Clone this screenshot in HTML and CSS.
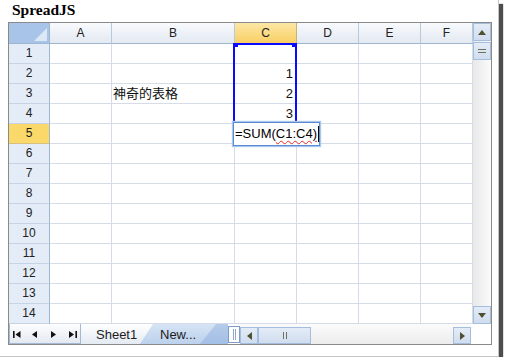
FILE: index.html
```html
<!DOCTYPE html>
<html>
<head>
<meta charset="utf-8">
<link rel="stylesheet" href="styles.css">
</head>
<body>
<div class="frame">
  <div class="title">SpreadJS</div>
  <div class="spread">
    <div class="body">
      <div class="sheet">
        <div class="cn"></div><div class="ch">A</div><div class="ch">B</div><div class="ch sel">C</div><div class="ch">D</div><div class="ch">E</div><div class="ch">F</div>
        <div class="rh">1</div><div class="c"></div><div class="c"></div><div class="c"></div><div class="c"></div><div class="c"></div><div class="c"></div>
        <div class="rh">2</div><div class="c"></div><div class="c"></div><div class="c num">1</div><div class="c"></div><div class="c"></div><div class="c"></div>
        <div class="rh">3</div><div class="c"></div><div class="c cjk">神奇的表格</div><div class="c num">2</div><div class="c"></div><div class="c"></div><div class="c"></div>
        <div class="rh">4</div><div class="c"></div><div class="c"></div><div class="c num">3</div><div class="c"></div><div class="c"></div><div class="c"></div>
        <div class="rh sel">5</div><div class="c"></div><div class="c"></div><div class="c"></div><div class="c"></div><div class="c"></div><div class="c"></div>
        <div class="rh">6</div><div class="c"></div><div class="c"></div><div class="c"></div><div class="c"></div><div class="c"></div><div class="c"></div>
        <div class="rh">7</div><div class="c"></div><div class="c"></div><div class="c"></div><div class="c"></div><div class="c"></div><div class="c"></div>
        <div class="rh">8</div><div class="c"></div><div class="c"></div><div class="c"></div><div class="c"></div><div class="c"></div><div class="c"></div>
        <div class="rh">9</div><div class="c"></div><div class="c"></div><div class="c"></div><div class="c"></div><div class="c"></div><div class="c"></div>
        <div class="rh">10</div><div class="c"></div><div class="c"></div><div class="c"></div><div class="c"></div><div class="c"></div><div class="c"></div>
        <div class="rh">11</div><div class="c"></div><div class="c"></div><div class="c"></div><div class="c"></div><div class="c"></div><div class="c"></div>
        <div class="rh">12</div><div class="c"></div><div class="c"></div><div class="c"></div><div class="c"></div><div class="c"></div><div class="c"></div>
        <div class="rh">13</div><div class="c"></div><div class="c"></div><div class="c"></div><div class="c"></div><div class="c"></div><div class="c"></div>
        <div class="rh">14</div><div class="c"></div><div class="c"></div><div class="c"></div><div class="c"></div><div class="c"></div><div class="c"></div>

        <div class="selection">
          <span class="h tl"></span><span class="h tr"></span><span class="h bl"></span><span class="h br"></span>
        </div>
        <div class="editor">=SUM(<span class="spell">C1:C4)</span><span class="caret"></span></div>
      </div>
      <div class="vscroll">
        <div class="sbtn vbtn"><svg width="8" height="5" viewBox="0 0 8 5"><polygon points="0,5 8,5 4,0" fill="#4e5036"/></svg></div>
        <div class="sbtn vthumb"><span class="hgrip"></span></div>
        <div class="vtrack"></div>
        <div class="sbtn vbtn"><svg width="8" height="5" viewBox="0 0 8 5"><polygon points="0,0 8,0 4,5" fill="#4e5036"/></svg></div>
      </div>
    </div>
    <div class="tabbar">
      <div class="nav">
        <svg width="70" height="18" viewBox="0 0 70 18">
          <rect x="3" y="6" width="1.6" height="7" fill="#111"/>
          <polygon points="5.5,9.5 10.5,6 10.5,13" fill="#111"/>
          <polygon points="22,9.5 27,6 27,13" fill="#111"/>
          <polygon points="46,9.5 41,6 41,13" fill="#111"/>
          <polygon points="64,9.5 59,6 59,13" fill="#111"/>
          <rect x="65.4" y="6" width="1.6" height="7" fill="#111"/>
        </svg>
      </div>
      <div class="tabs">
        <div class="tab active">Sheet1</div>
        <div class="tab other">New...</div>
      </div>
      <div class="split"><span class="sgrip"></span></div>
      <div class="hscroll">
        <div class="sbtn hbtn"><svg width="5" height="8" viewBox="0 0 5 8"><polygon points="5,0 5,8 0,4" fill="#4e5036"/></svg></div>
        <div class="sbtn hthumb"><span class="vgrip"></span></div>
        <div class="htrack"></div>
        <div class="sbtn hbtn"><svg width="5" height="8" viewBox="0 0 5 8"><polygon points="0,0 0,8 5,4" fill="#4e5036"/></svg></div>
      </div>
      <div class="corner"></div>
    </div>
  </div>
</div>
</body>
</html>
```
FILE: styles.css
```css
body {
  margin: 0;
  background: #fff;
  font-family: "Liberation Sans", Arial, sans-serif;
  color: #111;
}

.frame {
  width: 499px;
  height: 357px;
  box-sizing: border-box;
  padding-left: 8px;
  border-right: 1px solid #c4c4c4;
  border-bottom: 1px solid #c4c4c4;
  box-shadow: 4px 4px 1px #4d4d4d;
  background: #fff;
}

.title {
  font: bold 15.5px/20px "Liberation Serif", "Times New Roman", serif;
  height: 22px;
  padding-left: 4px;
  color: #000;
}

.spread {
  width: 484px;
  box-sizing: border-box;
  border: 1px solid #8a8a8a;
}

.body {
  display: flex;
}

.sheet {
  position: relative;
  display: grid;
  grid-template-columns: 41px 62px 123px 62px 62px 62px 52px;
  grid-template-rows: 21px repeat(14, 20px);
}

.c, .ch, .rh, .cn {
  box-sizing: border-box;
  border-right: 1px solid #d5dce8;
  border-bottom: 1px solid #d5dce8;
  white-space: nowrap;
}

.c {
  font-size: 13px;
  line-height: 19px;
  background: #fff;
}

.num {
  text-align: right;
  padding-right: 3px;
}

.cjk {
  font-family: "Liberation Sans", "Noto Sans CJK SC", sans-serif;
  padding-left: 1px;
}

.ch {
  background: linear-gradient(#f8fafd, #e3e9f2);
  border-right-color: #b9c9dc;
  border-bottom-color: #9eb6ce;
  text-align: center;
  font-size: 12px;
  line-height: 20px;
  color: #222;
}

.ch.sel {
  background: linear-gradient(#fde7a6, #f8cf63);
  border-right-color: #c9b27a;
}

.rh {
  background: #e4ecf7;
  border-bottom-color: #c6d3e4;
  border-right-color: #9eb6ce;
  text-align: center;
  font-size: 12px;
  line-height: 19px;
  color: #222;
}

.rh.sel {
  background: #fad86a;
  border-bottom-color: #d9bf7c;
}

.cn {
  position: relative;
  background: #a9c4e9;
  border-right-color: #9eb6ce;
  border-bottom-color: #9eb6ce;
}

.cn::after {
  content: "";
  position: absolute;
  right: 2px;
  bottom: 2px;
  width: 13px;
  height: 13px;
  background: #dde8f6;
  clip-path: polygon(100% 0, 100% 100%, 0 100%);
}

.selection {
  position: absolute;
  left: 224px;
  top: 20px;
  width: 64px;
  height: 82px;
  box-sizing: border-box;
  border: 2px solid #0a0aff;
}

.h {
  position: absolute;
  width: 5px;
  height: 4px;
  background: #0a0aff;
}
.tl { left: -2px; top: -2px; }
.tr { right: -2px; top: -2px; }
.bl { left: -2px; bottom: -2px; }
.br { right: -2px; bottom: -2px; }

.editor {
  position: absolute;
  left: 224px;
  top: 99px;
  width: 87px;
  height: 24px;
  box-sizing: border-box;
  border: 1px solid #5a8ad0;
  box-shadow: 0 0 1px 1px #a9c6ee;
  background: #fff;
  font-size: 13px;
  line-height: 21px;
  padding-left: 1px;
  white-space: nowrap;
  color: #000;
}

.spell {
  text-decoration: underline wavy #e02a2a;
  text-decoration-thickness: 1px;
  text-underline-offset: 2px;
}

.caret {
  display: inline-block;
  width: 1px;
  height: 16px;
  background: #000;
  vertical-align: -4px;
  margin-left: 1px;
}

.vscroll {
  width: 18px;
  display: flex;
  flex-direction: column;
  background: linear-gradient(to right, #e8e8e8, #fbfbfb);
}

.sbtn {
  box-sizing: border-box;
  border: 1px solid #a6bedd;
  background: linear-gradient(#e4ecf7, #d0ddef);
  display: flex;
  align-items: center;
  justify-content: center;
}

.vbtn {
  height: 18px;
}

.vthumb {
  height: 18px;
  margin-top: 1px;
}

.hgrip {
  width: 8px;
  height: 2px;
  border-top: 1px solid #6f7060;
  border-bottom: 1px solid #6f7060;
}

.vtrack {
  flex: 1;
}

.tabbar {
  display: flex;
  height: 20px;
  background: #fff;
}

.nav {
  width: 72px;
  box-sizing: border-box;
  border: 1px solid #a3b8d4;
  border-top: none;
  background: linear-gradient(#fdfdfe, #e4e9f1);
  display: flex;
  align-items: center;
}

.tabs {
  width: 147px;
  display: flex;
  background: linear-gradient(#b5cbea, #a3bfe5);
  overflow: hidden;
}

.tab {
  flex: none;
  height: 20px;
  box-sizing: border-box;
  font-size: 13px;
  line-height: 21px;
  color: #1c1c1c;
}

.tab.active {
  position: relative;
  z-index: 1;
  width: 72px;
  padding-left: 15px;
  background: linear-gradient(#ffffff, #e4eaf3);
  clip-path: polygon(0 0, 100% 0, calc(100% - 13px) 100%, 0 100%);
}

.tab.other {
  width: 76px;
  margin-left: -13px;
  padding-left: 20px;
  background: linear-gradient(#d6e4f5, #bcd1ec);
  clip-path: polygon(0 0, 100% 0, calc(100% - 16px) 100%, 0 100%);
}

.split {
  width: 12px;
  height: 17px;
  margin-top: 2px;
  box-sizing: border-box;
  border: 1px solid #7f9cc6;
  background: #fff;
  display: flex;
  align-items: center;
  justify-content: center;
}

.sgrip {
  width: 1px;
  height: 11px;
  border-left: 1px solid #8fa9cf;
  border-right: 1px solid #8fa9cf;
  background: #fff;
}

.hscroll {
  width: 231px;
  display: flex;
  align-items: flex-end;
  background: linear-gradient(#fbfbfb, #ececec);
}

.hbtn {
  width: 18px;
  height: 17px;
}

.hthumb {
  width: 53px;
  height: 17px;
}

.vgrip {
  width: 2px;
  height: 7px;
  border-left: 1px solid #6f7060;
  border-right: 1px solid #6f7060;
}

.htrack {
  flex: 1;
  height: 17px;
}

.corner {
  width: 20px;
  background: #fff;
}
```
